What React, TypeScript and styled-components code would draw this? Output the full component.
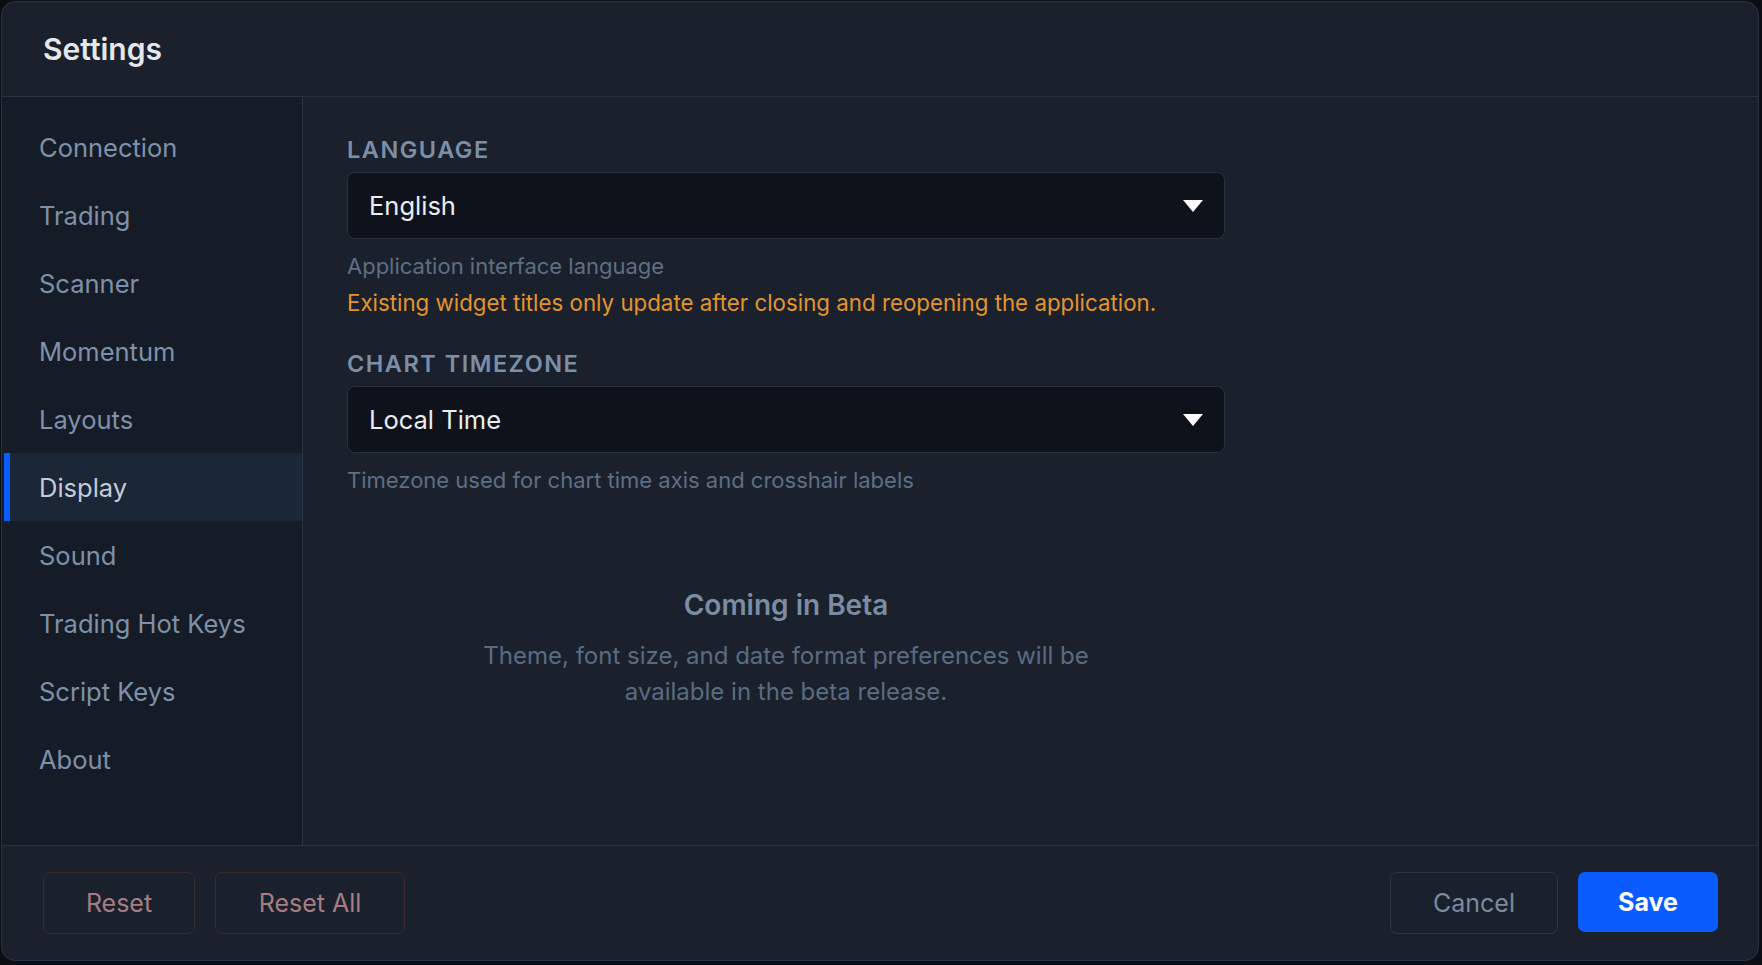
import React from 'react';
import styled, { createGlobalStyle } from 'styled-components';

const Global = createGlobalStyle`
  html, body {
    margin: 0;
    padding: 0;
    background: #0b0e13;
  }
  body {
    font-family: Inter, "Noto Sans", "Liberation Sans", sans-serif;
    -webkit-font-smoothing: antialiased;
  }
  * {
    box-sizing: border-box;
  }
`;

const sections = [
  'Connection',
  'Trading',
  'Scanner',
  'Momentum',
  'Layouts',
  'Display',
  'Sound',
  'Trading Hot Keys',
  'Script Keys',
  'About',
];

function Caret() {
  return (
    <svg width="20" height="12" viewBox="0 0 20 12">
      <path d="M0 0 H20 L10 12 Z" fill="#ffffff" />
    </svg>
  );
}

function Select({ value }: { value: string }) {
  return (
    <SelectBox>
      <span>{value}</span>
      <Caret />
    </SelectBox>
  );
}

export default function App() {
  return (
    <>
      <Global />
      <Dialog>
        <Header>
          <Title>Settings</Title>
        </Header>
        <Body>
          <Sidebar>
            {sections.map((s) => (
              <NavItem key={s} active={s === 'Display'}>
                {s}
              </NavItem>
            ))}
          </Sidebar>
          <Content>
            <Field>
              <Label>Language</Label>
              <Select value="English" />
              <Hint>Application interface language</Hint>
              <Warning>
                Existing widget titles only update after closing and reopening the application.
              </Warning>
            </Field>
            <Field>
              <Label>Chart Timezone</Label>
              <Select value="Local Time" />
              <Hint>Timezone used for chart time axis and crosshair labels</Hint>
            </Field>
            <Soon>
              <SoonTitle>Coming in Beta</SoonTitle>
              <SoonText>
                Theme, font size, and date format preferences will be
                <br />
                available in the beta release.
              </SoonText>
            </Soon>
          </Content>
        </Body>
        <Footer>
          <Group>
            <DangerButton style={{ width: 152 }}>Reset</DangerButton>
            <DangerButton style={{ width: 190 }}>Reset All</DangerButton>
          </Group>
          <Group>
            <GhostButton>Cancel</GhostButton>
            <PrimaryButton>Save</PrimaryButton>
          </Group>
        </Footer>
      </Dialog>
    </>
  );
}

const Dialog = styled.div`
  margin: 1px 0 0 1px;
  width: 1758px;
  height: 960px;
  display: flex;
  flex-direction: column;
  background: #1a212d;
  border: 1.5px solid #283345;
  border-radius: 14px;
  overflow: hidden;
`;

const Header = styled.div`
  height: 95px;
  flex-shrink: 0;
  display: flex;
  align-items: center;
  padding-left: 41px;
  border-bottom: 1.5px solid #283345;
`;

const Title = styled.h1`
  margin: 0;
  font-size: 30px;
  font-weight: 600;
  color: #e4e7ec;
`;

const Body = styled.div`
  flex: 1;
  display: flex;
  min-height: 0;
`;

const Sidebar = styled.nav`
  width: 301px;
  flex-shrink: 0;
  padding-top: 16px;
  background: #161c27;
  border-right: 1.5px solid #283345;
`;

const NavItem = styled.div<{ active?: boolean }>`
  height: 68px;
  display: flex;
  align-items: center;
  padding-left: 29px;
  font-size: 25.5px;
  color: ${(p) => (p.active ? '#c3ccd8' : '#7f91a9')};
  background: ${(p) => (p.active ? '#1b2636' : 'transparent')};
  border-left: 6px solid ${(p) => (p.active ? '#0a5cff' : 'transparent')};
  margin-left: 2px;
`;

const Content = styled.main`
  flex: 1;
  padding: 38px 0 0 44px;
  display: flex;
  flex-direction: column;
  gap: 33px;
`;

const Field = styled.div`
  width: 878px;
  display: flex;
  flex-direction: column;
`;

const Label = styled.div`
  font-size: 23.5px;
  font-weight: 600;
  letter-spacing: 1.5px;
  text-transform: uppercase;
  color: #7d8ea7;
  margin-bottom: 8px;
`;

const SelectBox = styled.div`
  height: 67px;
  display: flex;
  align-items: center;
  justify-content: space-between;
  padding: 0 21px 0 21px;
  background: #0e131b;
  border: 1.5px solid #27323f;
  border-radius: 8px;
  font-size: 25.5px;
  color: #e9ecf0;
`;

const Hint = styled.div`
  margin-top: 14px;
  font-size: 22px;
  color: #5f6e83;
`;

const Warning = styled.div`
  margin-top: 10px;
  font-size: 22.3px;
  color: #e2952c;
`;

const Soon = styled.div`
  width: 878px;
  margin-top: 62px;
  text-align: center;
`;

const SoonTitle = styled.div`
  font-size: 28px;
  font-weight: 600;
  color: #7c8ca4;
  margin-bottom: 16px;
`;

const SoonText = styled.div`
  font-size: 24px;
  line-height: 36px;
  color: #5c6b80;
`;

const Footer = styled.div`
  height: 115px;
  flex-shrink: 0;
  display: flex;
  align-items: center;
  justify-content: space-between;
  padding: 0 40px 0 41px;
  border-top: 1.5px solid #283345;
`;

const Group = styled.div`
  display: flex;
  gap: 20px;
`;

const Button = styled.button`
  height: 62px;
  border-radius: 7px;
  font-family: inherit;
  font-size: 25px;
  background: transparent;
  cursor: pointer;
`;

const DangerButton = styled(Button)`
  border: 1.5px solid #3a2a30;
  color: #a67d82;
`;

const GhostButton = styled(Button)`
  width: 168px;
  border: 1.5px solid #2a3646;
  color: #7a8aa1;
`;

const PrimaryButton = styled(Button)`
  width: 140px;
  height: 60px;
  border: none;
  background: #0a5cff;
  color: #ffffff;
  font-weight: 700;
`;
